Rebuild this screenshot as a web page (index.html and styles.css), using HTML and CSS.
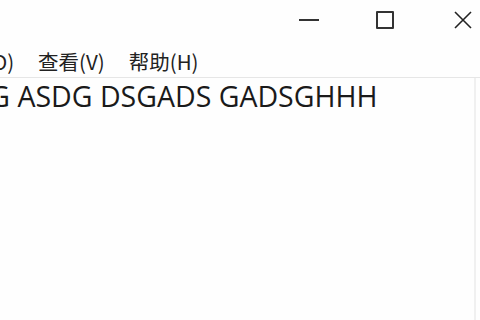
FILE: index.html
```html
<!DOCTYPE html>
<html>
<head>
<meta charset="utf-8">
<link rel="stylesheet" href="styles.css">
</head>
<body>
<div class="window">
  <div class="titlebar">
    <span class="min"></span>
    <span class="max"></span>
    <svg class="close" width="18" height="18" viewBox="0 0 18 18"><path d="M1 1L17 17M17 1L1 17" stroke="#222" stroke-width="1.6" fill="none"/></svg>
  </div>
  <div class="menubar">
    <span class="menu">格式(O)</span>
    <span class="menu">查看(V)</span>
    <span class="menu">帮助(H)</span>
  </div>
  <div class="editor">
    <div class="line">ASDG ASDG DSGADS GADSGHHH</div>
  </div>
</div>
</body>
</html>
```
FILE: styles.css
```css
html, body {
  margin: 0;
  padding: 0;
  width: 480px;
  height: 320px;
  overflow: hidden;
  background: #fefefe;
}
.window {
  display: flex;
  flex-direction: column;
  height: 320px;
}
.titlebar {
  height: 40px;
  display: flex;
  justify-content: flex-end;
  align-items: center;
  padding-right: 8px;
}
.min {
  display: block;
  width: 20px;
  height: 2px;
  background: #333;
  margin-right: 57px;
}
.max {
  display: block;
  width: 14px;
  height: 14px;
  border: 2px solid #333;
  border-radius: 1px;
  margin-right: 60px;
}
.close { display: block; }
.menubar {
  height: 38px;
  display: flex;
  align-items: center;
  gap: 24px;
  font-family: "Noto Sans CJK SC", sans-serif;
  font-size: 20.5px;
  color: #222;
  margin-left: -56px;
  padding-top: 5px;
  border-bottom: 1px solid #e6e6e6;
  box-sizing: border-box;
}
.menu { white-space: nowrap; }
.editor {
  flex: 1;
  margin-right: 4px;
  border-right: 2px solid #f0f0f0;
  overflow: hidden;
  background: #fefefe;
}
.line {
  font-family: "Open Sans", sans-serif;
  font-size: 28.5px;
  color: #1a1a1a;
  white-space: nowrap;
  margin-left: -65px;
  margin-top: 0px;
  line-height: 36px;
}
```
